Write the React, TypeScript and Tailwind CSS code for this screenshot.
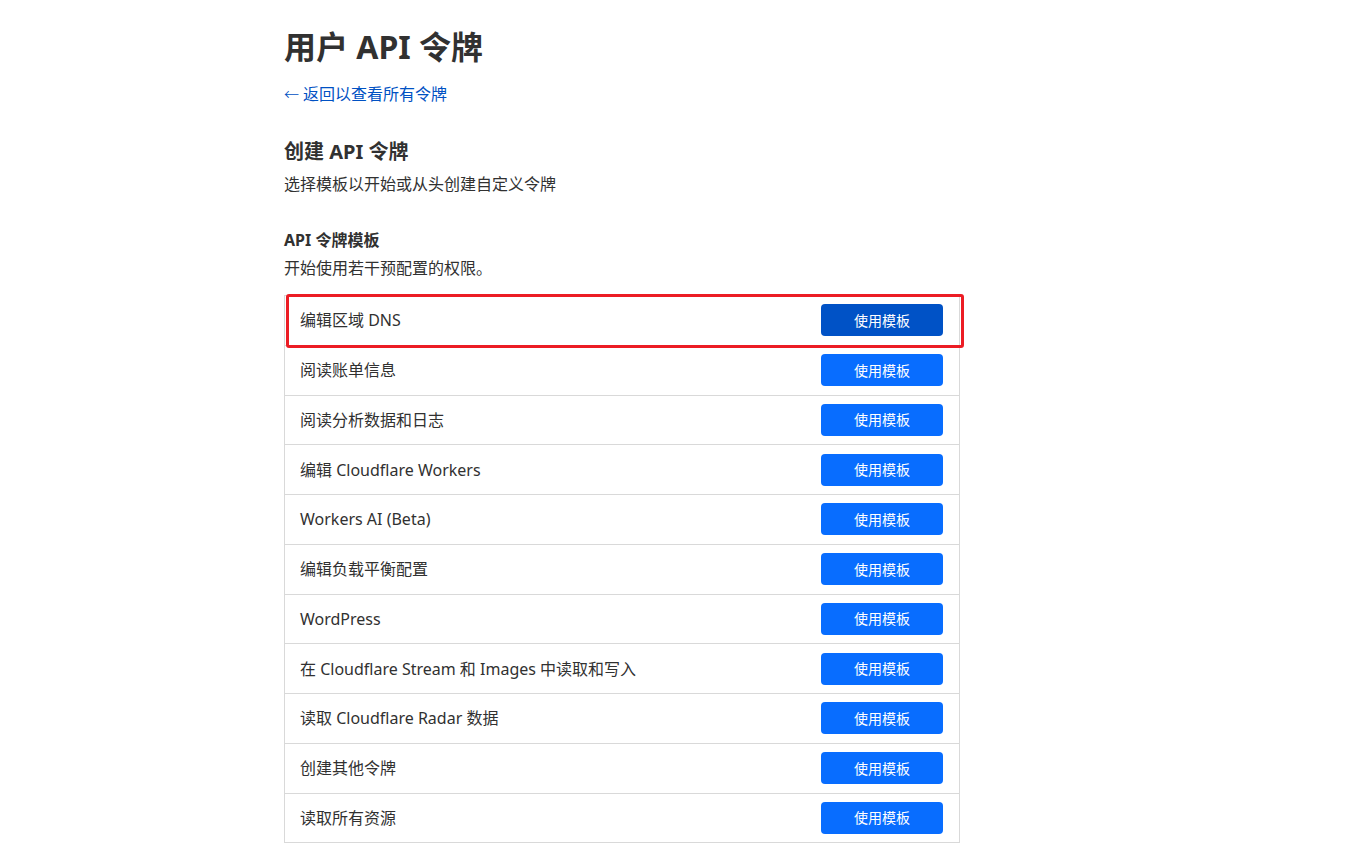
const templates = [
  "编辑区域 DNS",
  "阅读账单信息",
  "阅读分析数据和日志",
  "编辑 Cloudflare Workers",
  "Workers AI (Beta)",
  "编辑负载平衡配置",
  "WordPress",
  "在 Cloudflare Stream 和 Images 中读取和写入",
  "读取 Cloudflare Radar 数据",
  "创建其他令牌",
  "读取所有资源",
];

function TemplateRow({ name, active }: { name: string; active?: boolean }) {
  return (
    <div className="flex h-[49.75px] items-center justify-between border-b border-[#d9d9d9] pl-[15px] pr-[16px]">
      <span className="text-[16px] text-[#313131]">{name}</span>
      <button
        className={
          active
            ? "h-[32px] w-[122px] rounded-[4px] bg-[#0052c6] text-[14px] text-white"
            : "h-[32px] w-[122px] rounded-[4px] bg-[#086dff] text-[14px] text-white"
        }
      >
        使用模板
      </button>
    </div>
  );
}

export default function App() {
  return (
    <div
      className="min-h-screen bg-white text-[#313131]"
      style={{ fontFamily: '"Noto Sans", "Noto Sans CJK SC", sans-serif' }}
    >
      <div className="ml-[284px] w-[676px] pt-[27px]">
        <h1 className="text-[32px] font-bold leading-[40px]">用户 API 令牌</h1>
        <a className="mt-[15px] flex items-center gap-[4px] text-[16px] leading-[24px] text-[#0051c3]">
          <span className="text-[15px] font-light">←</span>
          <span>返回以查看所有令牌</span>
        </a>

        <h2 className="mt-[32px] text-[20px] font-bold leading-[28px]">创建 API 令牌</h2>
        <p className="mt-[6px] text-[16px] leading-[24px]">选择模板以开始或从头创建自定义令牌</p>

        <h3 className="mt-[32px] text-[16px] font-bold leading-[24px]">API 令牌模板</h3>
        <p className="mt-[4px] text-[16px] leading-[24px]">开始使用若干预配置的权限。</p>

        <div className="relative mt-[15px] border-x border-t border-[#d9d9d9]">
          {templates.map((t, i) => (
            <TemplateRow key={t} name={t} active={i === 0} />
          ))}
          {/* highlight frame */}
          <div className="pointer-events-none absolute left-[1px] top-[-2px] h-[54px] w-[678px] rounded-[3px] border-[3px] border-[#ec1c24]" />
        </div>
      </div>
    </div>
  );
}
